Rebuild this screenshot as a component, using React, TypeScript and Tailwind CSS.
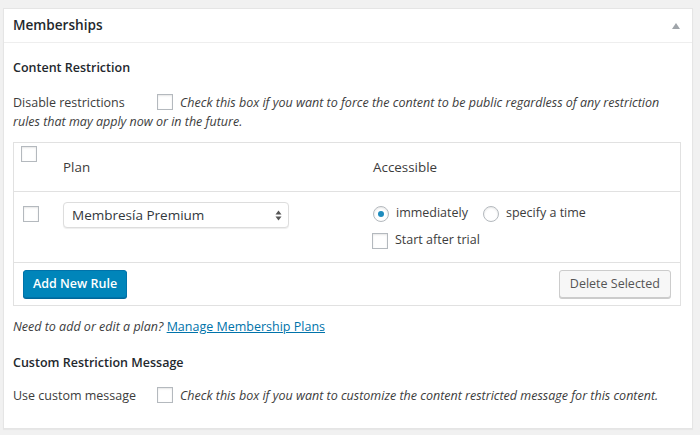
const font = { fontFamily: '"Open Sans", "Noto Sans", Arial, sans-serif' };

function Checkbox({ className = "" }: { className?: string }) {
  return (
    <span
      className={`inline-block h-4 w-4 shrink-0 border border-[#b4b9be] bg-white shadow-[inset_0_1px_2px_rgba(0,0,0,0.1)] ${className}`}
    />
  );
}

function Radio({ checked }: { checked?: boolean }) {
  return (
    <span className="inline-flex h-4 w-4 shrink-0 items-center justify-center rounded-full border border-[#b4b9be] bg-white shadow-[inset_0_1px_2px_rgba(0,0,0,0.1)]">
      {checked && <span className="h-[6px] w-[6px] rounded-full bg-[#1e8cbe]" />}
    </span>
  );
}

export default function App() {
  return (
    <div className="h-[435px] w-[700px] overflow-hidden bg-[#f1f1f1] pt-2 pl-[3px] text-[12.5px] text-[#3c3c3c]" style={font}>
      <div className="h-[421px] w-[690px] border border-[#e5e5e5] bg-white shadow-[0_1px_1px_rgba(0,0,0,0.04)]">
        <div className="flex h-[34px] items-center justify-between border-b border-[#eee] pl-[9px] pr-[9px]">
          <h2 className="text-[13.6px] font-semibold text-[#23282d]">Memberships</h2>
          <svg width="10" height="8" viewBox="0 0 10 8" className="mr-[2px]">
            <path d="M5 1 L9 7 L1 7 Z" fill="#a0a5aa" />
          </svg>
        </div>

        <div className="px-[9px]">
          <h3 className="mt-[15px] text-[12.5px] font-semibold leading-5 text-[#23282d]">Content Restriction</h3>

          <div className="mt-[15px] leading-[19px]">
            <span className="inline-block w-[144px]">Disable restrictions</span>
            <Checkbox className="mr-[7px] align-[-3px]" />
            <em>Check this box if you want to force the content to be public regardless of any restriction rules that may apply now or in the future.</em>
          </div>

          <div className="mt-[11px] w-[668px] border border-[#e1e1e1]">
            <div className="grid h-[49px] grid-cols-[49px_310px_1fr] border-b border-[#e1e1e1] text-[13.4px]">
              <div className="pl-[7px] pt-[3px]">
                <Checkbox />
              </div>
              <div className="flex items-center pt-[1px]">Plan</div>
              <div className="flex items-center pt-[1px]">Accessible</div>
            </div>

            <div className="grid h-[71px] grid-cols-[49px_310px_1fr] border-b border-[#e1e1e1]">
              <div className="pl-[9px] pt-[14px]">
                <Checkbox />
              </div>
              <div className="pt-[10px]">
                <div className="flex h-[26px] w-[226px] items-center justify-between rounded-[4px] border border-[#ddd] bg-white pl-[8px] pr-[6px] text-[13.5px] text-[#32373c] shadow-[0_1px_1px_rgba(0,0,0,0.07)]">
                  <span>Membresía Premium</span>
                  <svg width="7" height="11" viewBox="0 0 7 11">
                    <path d="M3.5 0.5 L6.5 4.5 L0.5 4.5 Z M3.5 10.5 L6.5 6.5 L0.5 6.5 Z" fill="#555" />
                  </svg>
                </div>
              </div>
              <div className="pt-[12px]">
                <div className="flex h-[19px] items-center">
                  <Radio checked />
                  <span className="ml-[7px]">immediately</span>
                  <span className="ml-[15px]" />
                  <Radio />
                  <span className="ml-[7px]">specify a time</span>
                </div>
                <div className="mt-[8px] flex h-[19px] items-center">
                  <Checkbox className="-ml-[1px]" />
                  <span className="ml-[7px]">Start after trial</span>
                </div>
              </div>
            </div>

            <div className="flex h-[42px] items-center justify-between px-[9px]">
              <button className="h-[28px] rounded-[3px] border border-[#0073aa] bg-[#0085ba] px-[9px] text-[12.5px] font-semibold text-white shadow-[0_1px_0_#006799]">
                Add New Rule
              </button>
              <button className="h-[28px] rounded-[3px] border border-[#ccc] bg-[#f7f7f7] px-[10px] text-[12.5px] text-[#555] shadow-[0_1px_0_#ccc]">
                Delete Selected
              </button>
            </div>
          </div>

          <p className="mt-[11px] leading-[19px]">
            <em>Need to add or edit a plan?</em>{" "}
            <a className="text-[#0073aa] underline">Manage Membership Plans</a>
          </p>

          <h3 className="mt-[17px] text-[12.5px] font-semibold leading-[19px] text-[#23282d]">Custom Restriction Message</h3>

          <div className="mt-[14px] leading-[19px]">
            <span className="inline-block w-[144px]">Use custom message</span>
            <Checkbox className="mr-[7px] align-[-3px]" />
            <em>Check this box if you want to customize the content restricted message for this content.</em>
          </div>
        </div>
      </div>
    </div>
  );
}
